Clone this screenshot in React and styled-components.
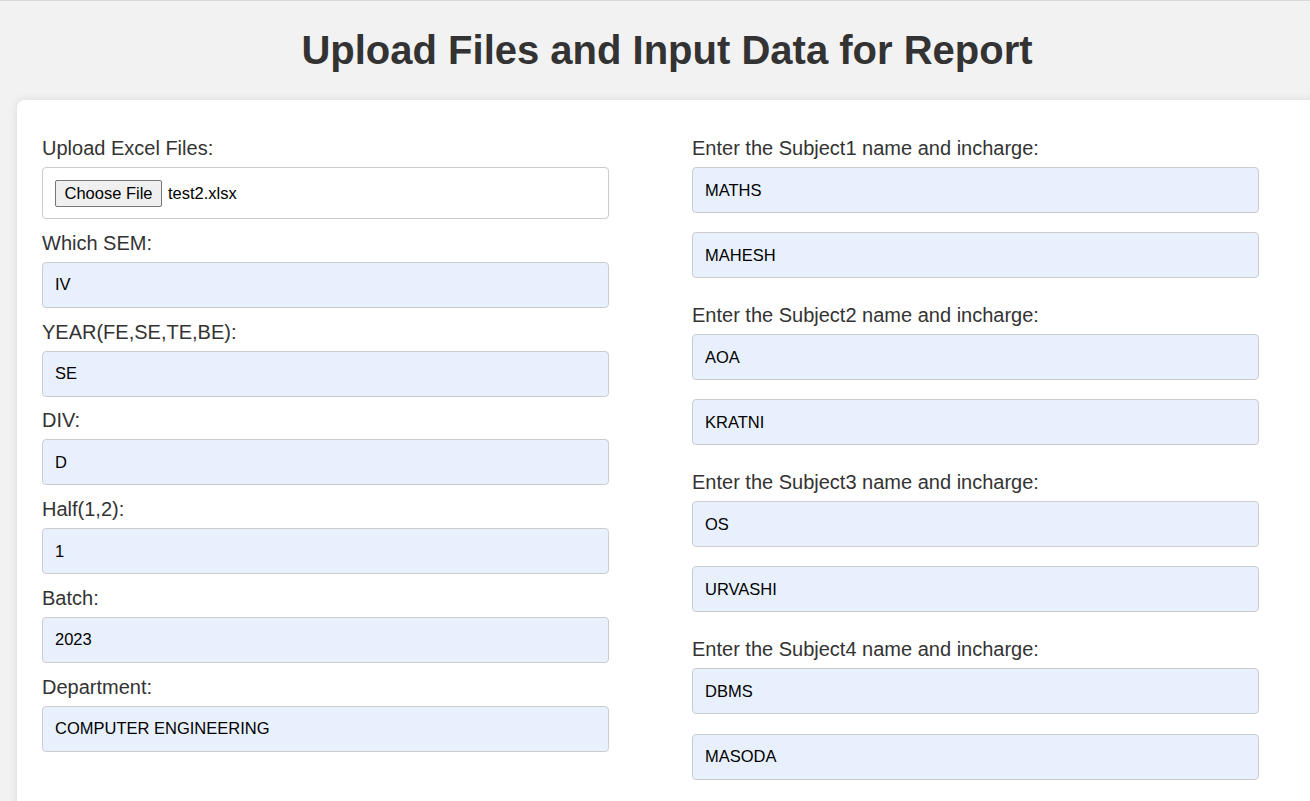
import styled, { createGlobalStyle } from "styled-components";

const GlobalStyle = createGlobalStyle`
  html, body {
    margin: 0;
    padding: 0;
    background: #f2f2f2;
    overflow: hidden;
  }
  * {
    box-sizing: border-box;
  }
`;

const Page = styled.div`
  width: 1334px;
  min-height: 801px;
  background: #f2f2f2;
  border-top: 1px solid #d8d8d8;
  font-family: "Liberation Sans", Arial, sans-serif;
`;

const Title = styled.h1`
  margin: 26px 0 27px;
  font-size: 40px;
  line-height: 46px;
  font-weight: 700;
  color: #333;
  text-align: center;
`;

const Card = styled.div`
  margin-left: 17px;
  width: 1300px;
  background: #fff;
  border-radius: 8px;
  box-shadow: 0 0 10px rgba(0, 0, 0, 0.1);
  padding: 37px 25px 40px;
  display: grid;
  grid-template-columns: 567px 567px;
  column-gap: 83px;
  align-items: start;
`;

const Column = styled.div`
  display: flex;
  flex-direction: column;
`;

const Label = styled.label`
  display: block;
  font-size: 20px;
  line-height: 23px;
  color: #333;
  margin-bottom: 7px;
`;

const Field = styled.div`
  display: flex;
  flex-direction: column;
  margin-bottom: 12.8px;
`;

const Group = styled.div`
  display: flex;
  flex-direction: column;
  gap: 19.3px;
  margin-bottom: 25.8px;

  ${Label} {
    margin-bottom: -12.3px;
  }
`;

const Input = styled.input`
  width: 100%;
  height: 46px;
  padding: 0 12px;
  border: 1px solid #ccc;
  border-radius: 4px;
  background: #e8f0fe;
  color: #000;
  font-family: "Liberation Sans", Arial, sans-serif;
  font-size: 16.5px;
  outline: none;
`;

const FileBox = styled.div`
  display: flex;
  align-items: center;
  gap: 6px;
  height: 52px;
  padding: 0 12px;
  border: 1px solid #ccc;
  border-radius: 4px;
  background: #fff;
`;

const FileButton = styled.button`
  height: 27px;
  width: 107px;
  padding: 0;
  background: #efefef;
  border: 1px solid #767676;
  border-radius: 2px;
  color: #000;
  font-family: "Liberation Sans", Arial, sans-serif;
  font-size: 16.5px;
`;

const FileName = styled.span`
  font-size: 16.5px;
  color: #000;
`;

const leftFields = [
  { label: "Which SEM:", value: "IV" },
  { label: "YEAR(FE,SE,TE,BE):", value: "SE" },
  { label: "DIV:", value: "D" },
  { label: "Half(1,2):", value: "1" },
  { label: "Batch:", value: "2023" },
  { label: "Department:", value: "COMPUTER ENGINEERING" },
];

const subjects = [
  { name: "MATHS", incharge: "MAHESH" },
  { name: "AOA", incharge: "KRATNI" },
  { name: "OS", incharge: "URVASHI" },
  { name: "DBMS", incharge: "MASODA" },
];

const App = () => {
  return (
    <Page>
      <GlobalStyle />
      <Title>Upload Files and Input Data for Report</Title>
      <Card>
        <Column>
          <Field>
            <Label>Upload Excel Files:</Label>
            <FileBox>
              <FileButton type="button">Choose File</FileButton>
              <FileName>test2.xlsx</FileName>
            </FileBox>
          </Field>
          {leftFields.map((f) => (
            <Field key={f.label}>
              <Label>{f.label}</Label>
              <Input defaultValue={f.value} />
            </Field>
          ))}
        </Column>
        <Column>
          {subjects.map((s, i) => (
            <Group key={s.name}>
              <Label>Enter the Subject{i + 1} name and incharge:</Label>
              <Input defaultValue={s.name} />
              <Input defaultValue={s.incharge} />
            </Group>
          ))}
        </Column>
      </Card>
    </Page>
  );
};

export default App;
